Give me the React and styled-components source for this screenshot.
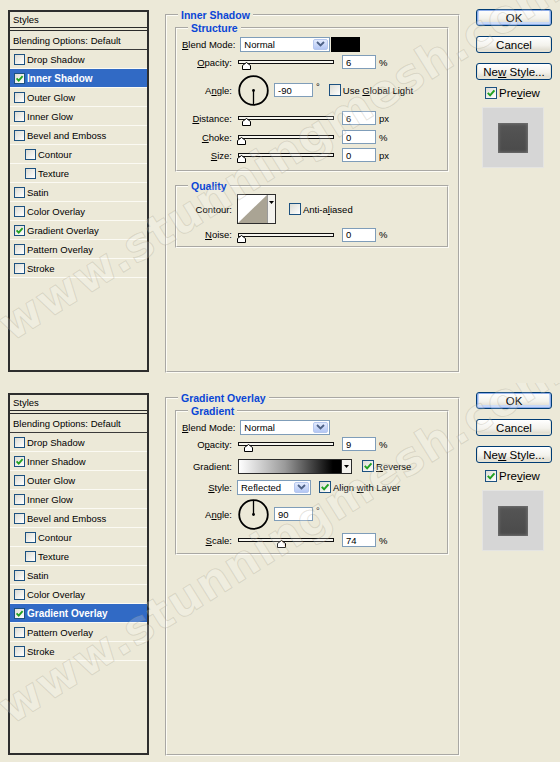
import React from "react"
import styled, { createGlobalStyle } from "styled-components"

const GlobalStyle = createGlobalStyle`
  * { box-sizing: border-box; }
  html, body { margin: 0; padding: 0; background: #ece9d8; }
  body {
    font-family: "Liberation Sans", Arial, sans-serif;
    font-size: 9.5px;
    color: #000;
  }
`

const STYLE_ITEMS = [
  { name: "Drop Shadow" },
  { name: "Inner Shadow", checked: true },
  { name: "Outer Glow" },
  { name: "Inner Glow" },
  { name: "Bevel and Emboss" },
  { name: "Contour", sub: true },
  { name: "Texture", sub: true },
  { name: "Satin" },
  { name: "Color Overlay" },
  { name: "Gradient Overlay", checked: true },
  { name: "Pattern Overlay" },
  { name: "Stroke" },
]

function Check({ size = 11, checked }) {
  return (
    <CheckBox $size={size}>
      {checked && (
        <svg width={size - 2} height={size - 2} viewBox="0 0 9 9">
          <path d="M1.6 4.4 L3.7 6.6 L7.6 2.1" fill="none" stroke="#21a121" strokeWidth="1.8" />
        </svg>
      )}
    </CheckBox>
  )
}

function Select({ width, value }) {
  return (
    <SelectBox $w={width}>
      <span>{value}</span>
      <DropBtn>
        <svg width="9" height="6" viewBox="0 0 9 6">
          <path d="M1 1 L4.5 4.5 L8 1" stroke="#4d6185" strokeWidth="1.8" fill="none" />
        </svg>
      </DropBtn>
    </SelectBox>
  )
}

function Slider({ pos }) {
  return (
    <SliderBox>
      <Track />
      <Thumb style={{ left: 3 + pos * 88 - 4.5 }}>
        <svg width="9" height="8" viewBox="0 0 9 8">
          <path d="M0.5 3.5 L4.5 0.5 L8.5 3.5 L8.5 7.5 L0.5 7.5 Z" fill="#fff" stroke="#000" />
        </svg>
      </Thumb>
    </SliderBox>
  )
}

function Dial({ up }) {
  return (
    <DialWrap>
      <svg width="31" height="31" viewBox="0 0 31 31">
        <circle cx="15.5" cy="15.5" r="14.3" fill="none" stroke="#000" strokeWidth="1.8" />
        <circle cx="15.5" cy="15.5" r="1.4" fill="#000" />
        <line x1="15.5" y1="15.5" x2="15.5" y2={up ? 1.5 : 29.5} stroke="#000" strokeWidth="1.3" />
      </svg>
    </DialWrap>
  )
}

function SmallArrow() {
  return (
    <svg width="5" height="3" viewBox="0 0 5 3">
      <path d="M0 0 L5 0 L2.5 3 Z" fill="#000" />
    </svg>
  )
}

function StyleList({ selected }) {
  return (
    <ListPanel>
      <ListHeader>Styles</ListHeader>
      <BlendRow>Blending Options: Default</BlendRow>
      {STYLE_ITEMS.map(item => (
        <ListRow key={item.name} $sub={item.sub} $selected={item.name === selected}>
          <Check checked={item.checked} />
          <ListText>{item.name}</ListText>
        </ListRow>
      ))}
    </ListPanel>
  )
}

function SideButtons() {
  return (
    <Side>
      <DlgButton $default>OK</DlgButton>
      <DlgButton>Cancel</DlgButton>
      <DlgButton>
        <span>Ne<u>w</u> Style...</span>
      </DlgButton>
      <PreviewRow>
        <Check size={12} checked />
        <span>Pre<u>v</u>iew</span>
      </PreviewRow>
      <PreviewBox>
        <PreviewSquare />
      </PreviewBox>
    </Side>
  )
}

function InnerShadowPanel() {
  return (
    <Group $w={295} $h={364} $pad="1px 9px 0 8px">
      <Legend $ml={3}>Inner Shadow</Legend>
      <Group $pad="2px 5px 6px 5px">
        <Legend $ml={6}>Structure</Legend>
        <Row $h={16}>
          <Label><span><u>B</u>lend Mode:</span></Label>
          <Select width={90} value="Normal" />
          <Swatch />
        </Row>
        <Row $h={20}>
          <Label><span><u>O</u>pacity:</span></Label>
          <Slider pos={0.06} />
          <NumBox>6</NumBox>
          <Unit>%</Unit>
        </Row>
        <Row $h={36}>
          <Label><span>A<u>n</u>gle:</span></Label>
          <Dial />
          <NumBox $w={39} $ml={5}>-90</NumBox>
          <Degree>°</Degree>
          <CheckSpot $ml={9}>
            <Check size={12} />
            <span>Use <u>G</u>lobal Light</span>
          </CheckSpot>
        </Row>
        <Row $h={20}>
          <Label><span><u>D</u>istance:</span></Label>
          <Slider pos={0.06} />
          <NumBox>6</NumBox>
          <Unit>px</Unit>
        </Row>
        <Row $h={18}>
          <Label><span><u>C</u>hoke:</span></Label>
          <Slider pos={0} />
          <NumBox>0</NumBox>
          <Unit>%</Unit>
        </Row>
        <Row $h={18}>
          <Label><span><u>S</u>ize:</span></Label>
          <Slider pos={0} />
          <NumBox>0</NumBox>
          <Unit>px</Unit>
        </Row>
      </Group>
      <Group $mt={8} $pad="1px 5px 2px 5px">
        <Legend $ml={6}>Quality</Legend>
        <Row $h={32}>
          <Label><span>Contour:</span></Label>
          <ContourBox>
            <ContourPreview>
              <svg width="29" height="28" viewBox="0 0 29 28">
                <path d="M0 28 L29 0 L29 28 Z" fill="#aaa494" />
              </svg>
            </ContourPreview>
            <ContourArrow>
              <SmallArrow />
            </ContourArrow>
          </ContourBox>
          <CheckSpot $ml={13}>
            <Check size={12} />
            <span>Anti-a<u>l</u>iased</span>
          </CheckSpot>
        </Row>
        <Row $h={19}>
          <Label><span><u>N</u>oise:</span></Label>
          <Slider pos={0} />
          <NumBox>0</NumBox>
          <Unit>%</Unit>
        </Row>
      </Group>
    </Group>
  )
}

function GradientOverlayPanel() {
  return (
    <Group $w={295} $h={364} $pad="1px 9px 0 8px">
      <Legend $ml={3}>Gradient Overlay</Legend>
      <Group $pad="2px 5px 6px 5px">
        <Legend $ml={6}>Gradient</Legend>
        <Row $h={16}>
          <Label><span><u>B</u>lend Mode:</span></Label>
          <Select width={90} value="Normal" />
        </Row>
        <Row $h={18}>
          <Label><span>O<u>p</u>acity:</span></Label>
          <Slider pos={0.09} />
          <NumBox>9</NumBox>
          <Unit>%</Unit>
        </Row>
        <Row $h={26}>
          <Label><span>Gradient:</span></Label>
          <GradientBar />
          <GradientArrow>
            <SmallArrow />
          </GradientArrow>
          <CheckSpot $ml={10}>
            <Check size={12} checked />
            <span><u>R</u>everse</span>
          </CheckSpot>
        </Row>
        <Row $h={16}>
          <Label><span><u>S</u>tyle:</span></Label>
          <Select width={74} value="Reflected" />
          <CheckSpot $ml={8}>
            <Check size={12} checked />
            <span>Align <u>w</u>ith Layer</span>
          </CheckSpot>
        </Row>
        <Row $h={38}>
          <Label><span>A<u>n</u>gle:</span></Label>
          <Dial up />
          <NumBox $w={39} $ml={5}>90</NumBox>
          <Degree>°</Degree>
        </Row>
        <Row $h={14}>
          <Label><span><u>S</u>cale:</span></Label>
          <Slider pos={0.457} />
          <NumBox>74</NumBox>
          <Unit>%</Unit>
        </Row>
      </Group>
    </Group>
  )
}

export default function App() {
  return (
    <Page>
      <GlobalStyle />
      <Dialog $h={383}>
        <StyleList selected="Inner Shadow" />
        <Main>
          <InnerShadowPanel />
        </Main>
        <SideButtons />
        <Watermark>www.stunningmesh.com</Watermark>
      </Dialog>
      <Dialog $h={379}>
        <StyleList selected="Gradient Overlay" />
        <Main>
          <GradientOverlayPanel />
        </Main>
        <SideButtons />
        <Watermark>www.stunningmesh.com</Watermark>
      </Dialog>
    </Page>
  )
}

// styled components

const Page = styled.div`
  width: 560px;
  height: 762px;
  overflow: hidden;
  background: #ece9d8;
`

const Dialog = styled.div`
  position: relative;
  display: flex;
  align-items: flex-start;
  height: ${p => p.$h}px;
  padding: 9px 0 0 8px;
  overflow: hidden;
`

const ListPanel = styled.div`
  flex: none;
  width: 141px;
  height: 362px;
  margin-top: 1px;
  border: 2px solid #2e2e2e;
  display: flex;
  flex-direction: column;
`

const ListHeader = styled.div`
  height: 19px;
  padding: 0 0 1px 3px;
  display: flex;
  align-items: center;
  border-bottom: 4px double #2a2a2a;
`

const BlendRow = styled.div`
  height: 19px;
  padding-left: 3px;
  display: flex;
  align-items: center;
  border-bottom: 1px solid #3a3a3a;
`

const ListRow = styled.div`
  height: 19px;
  display: flex;
  align-items: center;
  padding-left: ${p => (p.$sub ? 15 : 4)}px;
  border-bottom: 1px solid #fbfaf3;
  background: ${p => (p.$selected ? "#316ac5" : "transparent")};
  color: ${p => (p.$selected ? "#fff" : "#000")};
  font-weight: ${p => (p.$selected ? "bold" : "normal")};
  font-size: ${p => (p.$selected ? "10px" : "9.5px")};
`

const ListText = styled.span`
  margin-left: 2px;
  white-space: nowrap;
`

const CheckBox = styled.span`
  flex: none;
  width: ${p => p.$size}px;
  height: ${p => p.$size}px;
  border: 1px solid #1c5180;
  background: linear-gradient(135deg, #dcdcd4, #fff);
  display: flex;
  align-items: center;
  justify-content: center;
`

const Main = styled.div`
  flex: none;
  margin-left: 16px;
`

const Group = styled.fieldset`
  margin: ${p => p.$mt || 0}px 0 0;
  padding: ${p => p.$pad};
  border: 2px groove #fdfcf5;
  min-width: 0;
  ${p => (p.$w ? `width: ${p.$w}px;` : "")}
  ${p => (p.$h ? `height: ${p.$h}px;` : "")}
`

const Legend = styled.legend`
  margin-left: ${p => p.$ml}px;
  padding: 0 3px;
  height: 12px;
  font-size: 10.5px;
  line-height: 12px;
  font-weight: bold;
  color: #0a46d6;
`

const Row = styled.div`
  display: flex;
  align-items: center;
  height: ${p => p.$h}px;
`

const Label = styled.span`
  flex: 0 0 50px;
  display: flex;
  justify-content: flex-end;
  margin-right: 5px;
  white-space: nowrap;
`

const SelectBox = styled.div`
  width: ${p => p.$w}px;
  height: 15px;
  border: 1px solid #7f9db9;
  background: #fff;
  display: flex;
  justify-content: space-between;
  padding: 1px 1px 1px 3px;
  span {
    align-self: center;
  }
`

const DropBtn = styled.div`
  width: 15px;
  border: 1px solid #b7c8ee;
  border-radius: 2px;
  background: linear-gradient(#e3ebfd, #b4c7f4);
  display: flex;
  align-items: center;
  justify-content: center;
`

const Swatch = styled.div`
  width: 29px;
  height: 15px;
  margin-left: 1px;
  background: #000;
`

const SliderBox = styled.div`
  position: relative;
  width: 96px;
  height: 14px;
  margin-left: 1px;
  display: flex;
  align-items: center;
`

const Track = styled.div`
  width: 100%;
  height: 4px;
  border: 1px solid #111;
  background: #f7f6ef;
`

const Thumb = styled.div`
  position: absolute;
  top: 7px;
  line-height: 0;
`

const NumBox = styled.div`
  width: ${p => p.$w || 34}px;
  height: 14px;
  margin-left: ${p => (p.$ml === undefined ? 8 : p.$ml)}px;
  border: 1px solid #7f9db9;
  background: #fff;
  padding-left: 3px;
  display: flex;
  align-items: center;
`

const Unit = styled.span`
  margin-left: 3px;
`

const Degree = styled.span`
  margin-left: 3px;
  margin-bottom: 7px;
`

const DialWrap = styled.div`
  line-height: 0;
  margin-left: 1px;
`

const CheckSpot = styled.div`
  display: flex;
  align-items: center;
  gap: 2px;
  margin-left: ${p => p.$ml}px;
  white-space: nowrap;
`

const ContourBox = styled.div`
  width: 39px;
  height: 30px;
  border: 1px solid #2d2d2d;
  background: #fff;
  display: flex;
`

const ContourPreview = styled.div`
  line-height: 0;
  flex: none;
`

const ContourArrow = styled.div`
  flex: 1;
  border-left: 1px solid #9a9a9a;
  background: #f4f3ee;
  display: flex;
  justify-content: center;
  padding-top: 6px;
  line-height: 0;
`

const GradientBar = styled.div`
  width: 104px;
  height: 15px;
  margin-left: 1px;
  border: 1px solid #2a2a2a;
  background: linear-gradient(to right, #fff 0%, #9a9a9a 45%, #000 92%);
`

const GradientArrow = styled.div`
  width: 10px;
  height: 15px;
  border: 1px solid #2a2a2a;
  border-left: none;
  background: #f4f3ee;
  display: flex;
  align-items: center;
  justify-content: center;
`

const Side = styled.div`
  flex: none;
  width: 76px;
  margin-left: 16px;
  display: flex;
  flex-direction: column;
`

const DlgButton = styled.div`
  height: 17px;
  margin-bottom: 10px;
  border: 1px solid #003c74;
  border-radius: 3px;
  background: linear-gradient(#ffffff, #f3f2ec 55%, #d9d5c7);
  display: flex;
  align-items: center;
  justify-content: center;
  white-space: nowrap;
  font-size: 11.5px;
  box-shadow: ${p =>
    p.$default
      ? "inset 0 0 0 1px #8cacea, inset 0 -1px 0 2px #c6d7f7"
      : "inset 0 -1px 0 1px #e6e3d6"};
`

const PreviewRow = styled.div`
  height: 14px;
  margin-top: -4px;
  padding-left: 9px;
  display: flex;
  align-items: center;
  gap: 2px;
  font-size: 11.5px;
`

const PreviewBox = styled.div`
  width: 62px;
  height: 61px;
  margin: 7px 0 0 6px;
  background: #d6d6d6;
  border: 1px solid #e4e4e2;
  display: flex;
  align-items: center;
  justify-content: center;
`

const PreviewSquare = styled.div`
  width: 30px;
  height: 30px;
  background: linear-gradient(#555, #4a4a4a);
  box-shadow: inset 0 0 3px 1px #727272;
`

const Watermark = styled.div`
  position: absolute;
  left: 16px;
  top: 300px;
  height: 50px;
  line-height: 50px;
  white-space: nowrap;
  font-family: "DejaVu Sans", sans-serif;
  font-weight: bold;
  font-size: 46px;
  letter-spacing: 1px;
  color: rgba(255, 255, 255, 0.2);
  -webkit-text-stroke: 1px rgba(150, 144, 122, 0.24);
  transform: rotate(-32deg);
  transform-origin: 0 100%;
  pointer-events: none;
  z-index: 5;
`
